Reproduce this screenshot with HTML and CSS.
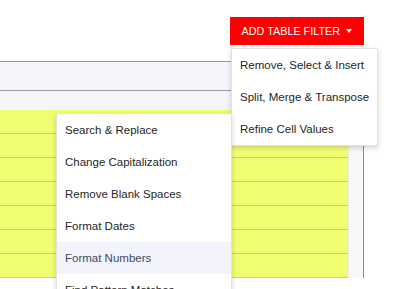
FILE: index.html
```html
<!DOCTYPE html>
<html lang="en">
<head>
  <meta charset="UTF-8">
  <title>Table Filters</title>
  <link rel="stylesheet" href="styles.css">
</head>
<body>

  <!-- Toolbar -->
  <div class="toolbar">
    <button class="filter-btn">Add Table Filter <span class="caret"></span></button>
  </div>

  <!-- Filter category menu -->
  <ul class="menu menu-main">
    <li>Remove, Select &amp; Insert</li>
    <li>Split, Merge &amp; Transpose</li>
    <li>Refine Cell Values</li>
  </ul>

  <!-- Table -->
  <div class="table-frame">
    <div class="table-head"></div>
    <div class="table-subhead"></div>
    <div class="table-scroll">
      <div class="table-body">
        <div class="row"></div>
        <div class="row"></div>
        <div class="row"></div>
        <div class="row"></div>
        <div class="row"></div>
        <div class="row"></div>
        <div class="row"></div>
      </div>
      <div class="scroll-track"></div>
    </div>
  </div>

  <!-- Refine Cell Values submenu -->
  <ul class="menu menu-sub">
    <li>Search &amp; Replace</li>
    <li>Change Capitalization</li>
    <li>Remove Blank Spaces</li>
    <li>Format Dates</li>
    <li class="active">Format Numbers</li>
    <li>Find Pattern Matches</li>
  </ul>

</body>
</html>
```

FILE: styles.css
```css
body {
  margin: 0;
  background: #fff;
  font-family: 'Liberation Sans', Arial, sans-serif;
  color: #262626;
  height: 289px;
  overflow: hidden;
  position: relative;
}

.toolbar {
  display: flex;
  justify-content: flex-end;
  padding: 17px 44px 0 0;
  height: 61px;
  box-sizing: border-box;
}

.filter-btn {
  font-family: 'Liberation Sans', Arial, sans-serif;
  font-size: 10.8px;
  font-weight: 500;
  text-transform: uppercase;
  background-color: #ff0000;
  color: #fff;
  border: none;
  height: 28px;
  padding: 0 12px;
  display: flex;
  align-items: center;
  gap: 6px;
  cursor: pointer;
}

.caret {
  display: inline-block;
  width: 0;
  height: 0;
  border-left: 3.5px solid transparent;
  border-right: 3.5px solid transparent;
  border-top: 4px solid #fff;
}

.menu {
  position: absolute;
  margin: 0;
  padding: 0;
  list-style: none;
  background: #fff;
  border: 1px solid #e2e2e2;
  box-shadow: 0 2px 5px rgba(0, 0, 0, 0.18);
  font-size: 11.5px;
  z-index: 2;
}

.menu li {
  height: 32px;
  line-height: 32px;
  padding: 0 8px;
  white-space: nowrap;
}

.menu li.active {
  background-color: #f3f3fb;
  color: #3e4a5e;
}

.menu-main {
  top: 48px;
  left: 231px;
  width: 145px;
}

.menu-sub {
  top: 113px;
  left: 56px;
  width: 174px;
}

.table-frame {
  width: 364px;
  border-top: 1px solid #9a9a9a;
  border-right: 1px solid #8a8a8a;
  box-sizing: border-box;
}

.table-head {
  height: 28px;
  background: #f6f5fc;
  border-bottom: 1px solid #9a9a9a;
}

.table-subhead {
  height: 19px;
  background: #f6f5fc;
}

.table-scroll {
  display: flex;
}

.table-body {
  flex: 1;
  background: #f1fe72;
}

.row {
  height: 23px;
  border-bottom: 1px solid #c9c78f;
}

.scroll-track {
  width: 15px;
  background: #f8f8fa;
  border-left: 1px solid #ececef;
  box-sizing: border-box;
}
```
